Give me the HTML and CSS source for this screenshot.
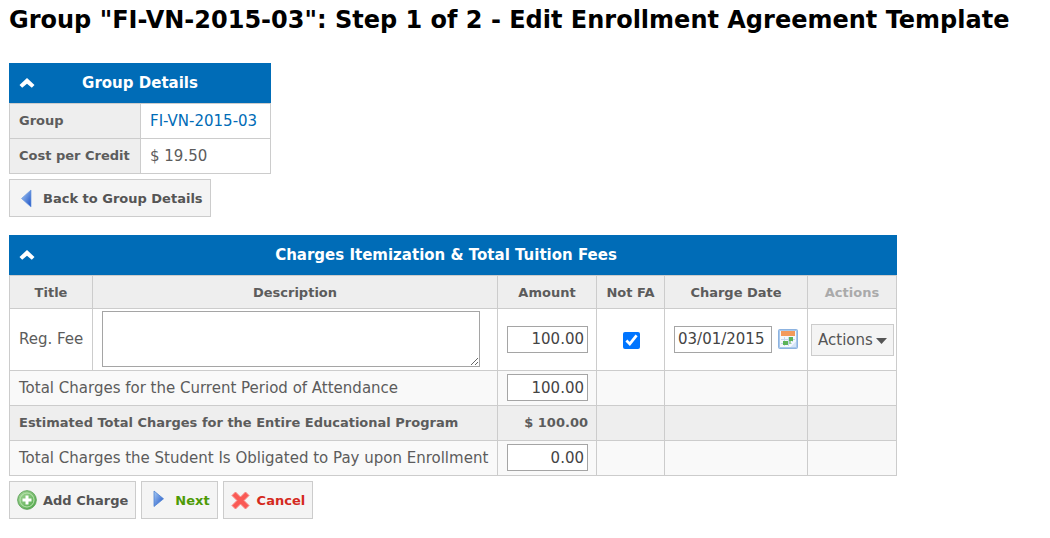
FILE: index.html
```html
<!DOCTYPE html>
<html lang="en">
<head>
    <meta charset="UTF-8">
    <meta name="viewport" content="width=device-width, initial-scale=1.0">
    <title>Edit Enrollment Agreement Template</title>
    <link rel="stylesheet" href="styles.css">
</head>
<body>
    <h1>Group "FI-VN-2015-03": Step 1 of 2 - Edit Enrollment Agreement Template</h1>

    <section class="panel">
        <div class="panel-header">
            <button type="button" class="toggle" aria-label="Collapse Group Details">
                <svg width="16" height="10" viewBox="0 0 16 10"><path d="M8 0 L15.500 7 L12.800 9.800 L8 5.800 L3.200 9.800 L0.500 7 Z" fill="#fff"/></svg>
            </button>
            <h2>Group Details</h2>
        </div>
        <table class="details">
            <tr>
                <th scope="row">Group</th>
                <td><a href="#">FI-VN-2015-03</a></td>
            </tr>
            <tr>
                <th scope="row">Cost per Credit</th>
                <td>$ 19.50</td>
            </tr>
        </table>
    </section>
    <div class="buttons">
        <button type="button" class="btn">
            <svg width="20" height="20" viewBox="0 0 20 20">
                <defs>
                    <linearGradient id="blue" x1="0" x2="1" y1="0" y2="1">
                        <stop offset="0" stop-color="#a9cdf5"/>
                        <stop offset="1" stop-color="#1a4fc4"/>
                    </linearGradient>
                </defs>
                <path d="M14 2 V19 L4.500 10.500 Z" fill="url(#blue)" stroke="#6c9ae0" stroke-width="0.700"/>
            </svg>
            Back to Group Details
        </button>
    </div>

    <form id="chargesForm">
        <section class="panel">
            <div class="panel-header charges-header">
                <button type="button" class="toggle" aria-label="Collapse Charges Itemization">
                    <svg width="16" height="10" viewBox="0 0 16 10"><path d="M8 0 L15.500 7 L12.800 9.800 L8 5.800 L3.200 9.800 L0.500 7 Z" fill="#fff"/></svg>
                </button>
                <h2>Charges Itemization &amp; Total Tuition Fees</h2>
            </div>
            <table class="charges">
                <colgroup>
                    <col class="col-title">
                    <col class="col-description">
                    <col class="col-amount">
                    <col class="col-fa">
                    <col class="col-date">
                    <col class="col-actions">
                </colgroup>
                <thead>
                    <tr>
                        <th>Title</th>
                        <th>Description</th>
                        <th>Amount</th>
                        <th>Not FA</th>
                        <th>Charge Date</th>
                        <th class="muted">Actions</th>
                    </tr>
                </thead>
                <tbody>
                    <tr class="item">
                        <td>Reg. Fee</td>
                        <td><textarea name="description" aria-label="Description"></textarea></td>
                        <td><input type="text" class="amount" name="amount" value="100.00" aria-label="Amount"></td>
                        <td class="center"><input type="checkbox" name="notFa" aria-label="Not FA" checked></td>
                        <td>
                            <div class="date-field">
                                <input type="text" class="date" name="chargeDate" value="03/01/2015" aria-label="Charge Date">
                                <button type="button" class="calendar" aria-label="Pick a date">
                                    <svg width="20" height="20" viewBox="0 0 20 20">
                                        <rect x="0.500" y="0.500" width="19" height="19" rx="1" fill="#a9c8ec" stroke="#8db3e0"/>
                                        <rect x="2" y="2" width="16" height="16" fill="#f4f8fd"/>
                                        <rect x="3" y="2" width="14" height="5" fill="#f39a5c"/>
                                        <path d="M3 10.500 H17 M3 14.500 H14 M6.500 8 V17 M10.500 8 V17 M14.500 8 V13" stroke="#c3d6ec"/>
                                        <rect x="11" y="8" width="4" height="4" fill="#5cb35a"/>
                                        <rect x="5" y="12" width="5" height="4" fill="#5cb35a"/>
                                        <rect x="11" y="12" width="2" height="3" fill="#9fd29a"/>
                                        <path d="M12.500 18 L18 12.500 V18 Z" fill="#d4e4f6"/>
                                    </svg>
                                </button>
                            </div>
                        </td>
                        <td class="actions">
                            <button type="button" class="menu">Actions
                                <svg width="11" height="6" viewBox="0 0 11 6"><path d="M0 0 H11 L5.500 6 Z" fill="#555"/></svg>
                            </button>
                        </td>
                    </tr>
                    <tr class="total">
                        <td colspan="2"><label for="periodTotal">Total Charges for the Current Period of Attendance</label></td>
                        <td><input type="text" class="amount" id="periodTotal" value="100.00"></td>
                        <td></td>
                        <td></td>
                        <td></td>
                    </tr>
                    <tr class="estimate">
                        <td colspan="2">Estimated Total Charges for the Entire Educational Program</td>
                        <td class="number">$ 100.00</td>
                        <td></td>
                        <td></td>
                        <td></td>
                    </tr>
                    <tr class="total">
                        <td colspan="2"><label for="enrollTotal">Total Charges the Student Is Obligated to Pay upon Enrollment</label></td>
                        <td><input type="text" class="amount" id="enrollTotal" value="0.00"></td>
                        <td></td>
                        <td></td>
                        <td></td>
                    </tr>
                </tbody>
            </table>
        </section>
        <div class="buttons">
            <button type="button" class="btn">
                <svg width="20" height="20" viewBox="0 0 20 20">
                    <defs>
                        <linearGradient id="green" x1="0" x2="1" y1="0" y2="1">
                            <stop offset="0" stop-color="#a8d99b"/>
                            <stop offset="1" stop-color="#4ba544"/>
                        </linearGradient>
                    </defs>
                    <circle cx="10" cy="10" r="9.300" fill="url(#green)" stroke="#5fa35a"/>
                    <circle cx="10" cy="10" r="7" fill="none" stroke="#b9e2b0"/>
                    <path d="M10 5.500 V14.500 M5.500 10 H14.500" stroke="#fff" stroke-width="3"/>
                </svg>
                Add Charge
            </button>
            <button type="submit" class="btn next">
                <svg width="20" height="20" viewBox="0 0 20 20">
                    <path d="M5 1 V16.500 L14.500 8.800 Z" fill="url(#blue)" stroke="#4c82d2" stroke-width="0.800"/>
                </svg>
                Next
            </button>
            <button type="button" class="btn cancel">
                <svg width="20" height="20" viewBox="0 0 20 20">
                    <path d="M4.500 2 L9.500 7 L14.500 2 L18 5.500 L13 10.500 L18 15.500 L14.500 19 L9.500 14 L4.500 19 L1 15.500 L6 10.500 L1 5.500 Z" fill="#fa5a55" stroke="#f98a86" stroke-linejoin="round"/>
                </svg>
                Cancel
            </button>
        </div>
    </form>
</body>
</html>
```
FILE: styles.css
```css
* {
    box-sizing: border-box;
}
body {
    font-family: Verdana, "DejaVu Sans", sans-serif;
    font-size: 15px;
    color: #5c5c5c;
    background-color: #fff;
    margin: 0;
    padding: 4px 9px;
}
h1 {
    margin: 0 0 27px;
    font-size: 24px;
    line-height: 32px;
    color: #000;
    white-space: nowrap;
}
.panel {
    width: fit-content;
}
.panel-header {
    display: grid;
    grid-template-columns: 16px 1fr 16px;
    align-items: center;
    height: 40px;
    padding: 0 10px;
    background-color: #006cb7;
    color: #fff;
}
.charges-header {
    padding-right: 24px;
}
h2 {
    margin: 0;
    font-size: 15px;
    text-align: center;
}
.toggle, .calendar {
    display: flex;
    padding: 0;
    border: none;
    background: none;
    cursor: pointer;
}
table {
    border-collapse: collapse;
}
th, td {
    height: 35px;
    padding: 0 8px 1px 9px;
    border: 1px solid #ccc;
    text-align: left;
    white-space: nowrap;
}
th {
    background-color: #eee;
    font-size: 13px;
}
a {
    color: #006cb7;
    text-decoration: none;
}
.details {
    width: 262px;
}
.details th {
    width: 131px;
}
.charges {
    width: 888px;
    table-layout: fixed;
}
.col-title {
    width: 83px;
}
.col-amount {
    width: 99px;
}
.col-fa {
    width: 68px;
}
.col-date {
    width: 143px;
}
.col-actions {
    width: 89px;
}
.charges thead th {
    height: 33px;
    padding: 0;
    text-align: center;
}
.charges .muted {
    color: #aaa;
}
.item td {
    height: 62px;
}
.item .center {
    text-align: center;
}
.item .actions {
    padding: 0 3px;
}
.total {
    background-color: #f9f9f9;
}
.estimate {
    background-color: #eee;
    font-size: 13px;
    font-weight: bold;
}
.estimate .number {
    text-align: right;
}
input, textarea, button {
    font-family: inherit;
    font-size: 15px;
    color: #444;
}
input[type="text"], textarea {
    display: block;
    margin: 0;
    padding: 0 3px;
    border: 1px solid #a5a5a5;
    background-color: #fff;
}
input[type="text"] {
    height: 27px;
}
textarea {
    width: 378px;
    height: 56px;
}
input[type="checkbox"] {
    display: block;
    width: 17px;
    height: 17px;
    margin: 2px auto 0;
    accent-color: #0075ff;
}
.amount {
    width: 81px;
    text-align: right;
}
.date-field {
    display: flex;
    align-items: center;
    gap: 6px;
}
.date {
    width: 98px;
}
.menu {
    display: flex;
    align-items: center;
    justify-content: space-between;
    width: 83px;
    height: 32px;
    padding: 0 6px;
    border: 1px solid #ccc;
    background-color: #f4f4f4;
    color: #555;
    cursor: pointer;
}
.menu svg {
    margin-top: 3px;
}
.buttons {
    display: flex;
    gap: 5px;
    margin: 5px 0 18px;
}
.btn {
    display: flex;
    align-items: center;
    gap: 6px;
    height: 38px;
    padding: 0 7px;
    border: 1px solid #ccc;
    background-color: #f4f4f4;
    color: #555;
    font-size: 13px;
    font-weight: bold;
    cursor: pointer;
}
.next {
    color: #4e9a06;
}
.cancel {
    color: #d42a1e;
}
```
